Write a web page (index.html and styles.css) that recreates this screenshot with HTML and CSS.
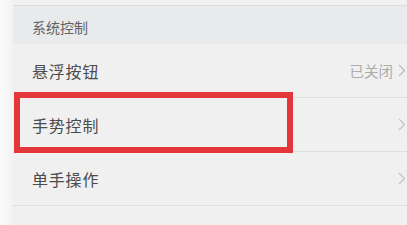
FILE: index.html
```html
<!DOCTYPE html>
<html>
	<head>
		<meta charset="UTF-8">
		<title>系统控制</title>
		<link rel="stylesheet" href="styles.css">
	</head>
	<body>
		<div class="screen">
			<div class="edge"></div>
			<div class="panel">
				<div class="topbar"></div>
				<div class="section-title">系统控制</div>
				<ul class="list">
					<li class="row">
						<span class="label">悬浮按钮</span>
						<span class="value">已关闭</span>
						<svg class="arrow" width="8" height="13" viewBox="0 0 8 13"><path d="M1 1l5.5 5.5L1 12" fill="none" stroke="#bdbdbd" stroke-width="1.3"/></svg>
					</li>
					<li class="row">
						<span class="label">手势控制</span>
						<svg class="arrow" width="8" height="13" viewBox="0 0 8 13"><path d="M1 1l5.5 5.5L1 12" fill="none" stroke="#c4c4c4" stroke-width="1.3"/></svg>
					</li>
					<li class="row">
						<span class="label">单手操作</span>
						<svg class="arrow" width="8" height="13" viewBox="0 0 8 13"><path d="M1 1l5.5 5.5L1 12" fill="none" stroke="#c4c4c4" stroke-width="1.3"/></svg>
					</li>
					<li class="row">
						<span class="label">通知管理</span>
					</li>
				</ul>
				<div class="mark"></div>
			</div>
		</div>
	</body>
</html>
```
FILE: styles.css
```css
*{
	padding: 0;
	margin: 0;
	box-sizing: border-box;
}
ul{
	list-style: none;
}
body{
	width: 407px;
	height: 225px;
	overflow: hidden;
	background: #f7f7f7;
	font-family: "Noto Sans CJK SC", "Noto Sans", sans-serif;
}
.screen{
	display: flex;
	height: 225px;
}
.edge{
	width: 13px;
	flex: none;
	background: linear-gradient(to right, #fbfbfb, #f2f2f2);
}
.panel{
	position: relative;
	flex: 1;
	background: #eeeff0;
}
.topbar{
	height: 6px;
	background: #f1f1f2;
	border-bottom: 1px solid #dcdcde;
}
.section-title{
	height: 38px;
	padding-left: 19px;
	line-height: 42px;
	font-size: 14px;
	color: #626262;
	background: #e9eaec;
}
.row{
	display: flex;
	align-items: center;
	height: 54px;
	padding-left: 19px;
	padding-right: 1px;
	border-bottom: 1px solid #dedede;
	background: #f0f0f1;
}
.row .label{
	flex: 1;
	font-size: 16px;
	color: #4b4b4b;
	letter-spacing: 0.8px;
}
.row .value{
	font-size: 14.5px;
	color: #acacac;
	margin-right: 5px;
}
.row .arrow{
	display: block;
}
.mark{
	position: absolute;
	left: 1px;
	top: 92px;
	width: 279px;
	height: 61px;
	border: 6px solid #e3373b;
}
```
